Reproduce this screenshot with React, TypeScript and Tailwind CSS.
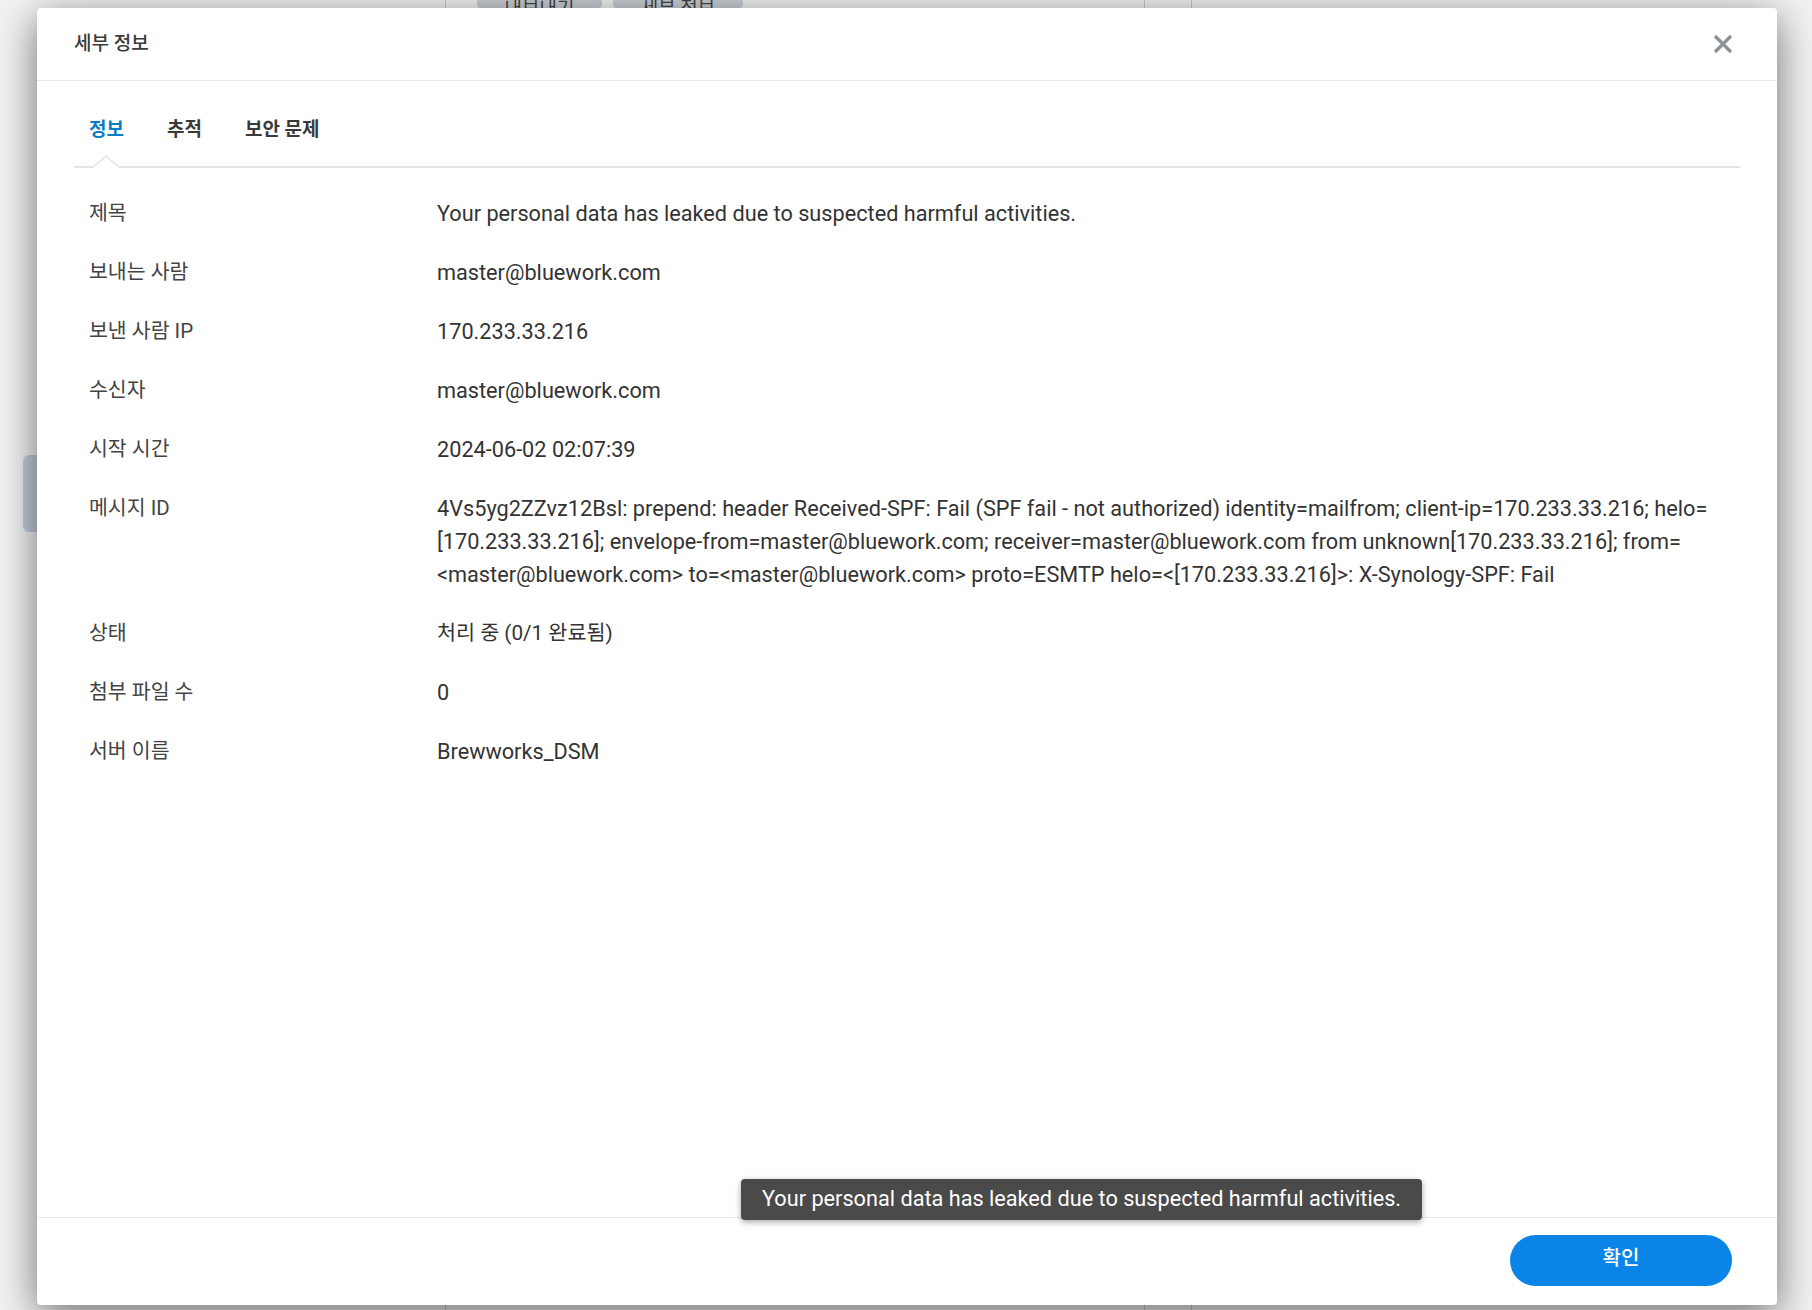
import React from "react";

const rows: { label: string; value: string[]; size?: string }[] = [
  { label: "제목", value: ["Your personal data has leaked due to suspected harmful activities."] },
  { label: "보내는 사람", value: ["master@bluework.com"] },
  { label: "보낸 사람 IP", value: ["170.233.33.216"] },
  { label: "수신자", value: ["master@bluework.com"] },
  { label: "시작 시간", value: ["2024-06-02 02:07:39"] },
  {
    label: "메시지 ID",
    value: [
      "4Vs5yg2ZZvz12Bsl: prepend: header Received-SPF: Fail (SPF fail - not authorized) identity=mailfrom; client-ip=170.233.33.216; helo=",
      "[170.233.33.216]; envelope-from=master@bluework.com; receiver=master@bluework.com from unknown[170.233.33.216]; from=",
      "<master@bluework.com> to=<master@bluework.com> proto=ESMTP helo=<[170.233.33.216]>: X-Synology-SPF: Fail",
    ],
  },
  { label: "상태", value: ["처리 중 (0/1 완료됨)"], size: "text-[20.7px]" },
  { label: "첨부 파일 수", value: ["0"] },
  { label: "서버 이름", value: ["Brewworks_DSM"] },
];

export default function App() {
  return (
    <div
      className="relative w-[1812px] h-[1310px] overflow-hidden bg-[#f2f2f2]"
      style={{ fontFamily: 'Roboto, "Noto Sans CJK KR", "Noto Sans", sans-serif' }}
    >
      {/* background app hints */}
      <div className="absolute left-[445px] top-0 w-px h-full bg-[#c8c8c8]" />
      <div className="absolute left-[1144px] top-0 w-px h-full bg-[#c8c8c8]" />
      <div className="absolute left-[1191px] top-0 w-px h-full bg-[#c8c8c8]" />
      <div className="absolute left-[477px] top-[-20px] w-[125px] h-[28px] rounded bg-[#c9ced3] flex items-end justify-center text-[19px] text-[#444] leading-[20px] overflow-hidden">
        <span className="translate-y-[11px]">내보내기</span>
      </div>
      <div className="absolute left-[613px] top-[-20px] w-[130px] h-[28px] rounded bg-[#c9ced3] flex items-end justify-center text-[19px] text-[#444] leading-[20px] overflow-hidden">
        <span className="translate-y-[11px]">세부 정보</span>
      </div>
      <div className="absolute left-[23px] top-[455px] w-[30px] h-[77px] rounded-md bg-[#c3cfdb]" />

      {/* dialog */}
      <div className="absolute left-[37px] top-[8px] w-[1740px] h-[1297px] bg-white rounded-[4px] shadow-[0_10px_40px_rgba(0,0,0,0.55)] flex flex-col">
        {/* header */}
        <div className="h-[73px] shrink-0 border-b border-[#e4e8eb] flex items-center justify-between pl-[37px] pr-[43px]">
          <span className="text-[19px] font-medium text-[#3a3a3a]">세부 정보</span>
          <svg width="22" height="22" viewBox="0 0 22 22" className="text-[#8c9196]">
            <path d="M3 3 L19 19 M19 3 L3 19" stroke="currentColor" strokeWidth="3.2" strokeLinecap="butt" />
          </svg>
        </div>

        {/* body */}
        <div className="flex-1 px-[37px] flex flex-col">
          <div className="relative flex gap-[43px] pl-[15px] pt-[36px] pb-[23px] border-b-2 border-[#e1e5e9]">
            <span className="text-[19px] leading-[26px] font-bold text-[#0a7dc4]">정보</span>
            <span className="text-[19px] leading-[26px] font-bold text-[#3a3a3a]">추적</span>
            <span className="text-[19px] leading-[26px] font-bold text-[#3a3a3a]">보안 문제</span>
            <svg className="absolute left-[19px] bottom-[-2px]" width="26" height="13" viewBox="0 0 26 13">
              <path d="M0 11 L13 0 L26 11 L26 13 L0 13 Z" fill="white" />
              <path d="M0 12 L13 1 L26 12" fill="none" stroke="#e1e5e9" strokeWidth="1.5" />
            </svg>
          </div>

          <div className="mt-[16px] flex flex-col">
            {rows.map((r) => (
              <div key={r.label} className="flex py-[13px] leading-[33px]">
                <div className="w-[363px] shrink-0 pl-[15px] text-[20.5px] text-[#444]">{r.label}</div>
                <div className={`flex-1 text-[#333] ${r.size ?? "text-[21.7px]"}`}>
                  {r.value.map((line, i) => (
                    <div key={i} className="whitespace-nowrap">
                      {line}
                    </div>
                  ))}
                </div>
              </div>
            ))}
          </div>
        </div>

        {/* footer */}
        <div className="h-[88px] shrink-0 border-t border-[#e8ecef] flex items-start justify-end pt-[17px] pr-[45px]">
          <button className="w-[222px] h-[51px] pb-[5px] rounded-full bg-[#0b84e8] text-white text-[20px] font-medium">
            확인
          </button>
        </div>
      </div>

      {/* tooltip */}
      <div className="absolute left-[741px] top-[1179px] h-[41px] px-[21px] flex items-center rounded-[4px] bg-[#4a4a4a] text-white text-[21.7px] shadow-[0_2px_6px_rgba(0,0,0,0.35)]">
        Your personal data has leaked due to suspected harmful activities.
      </div>
    </div>
  );
}
